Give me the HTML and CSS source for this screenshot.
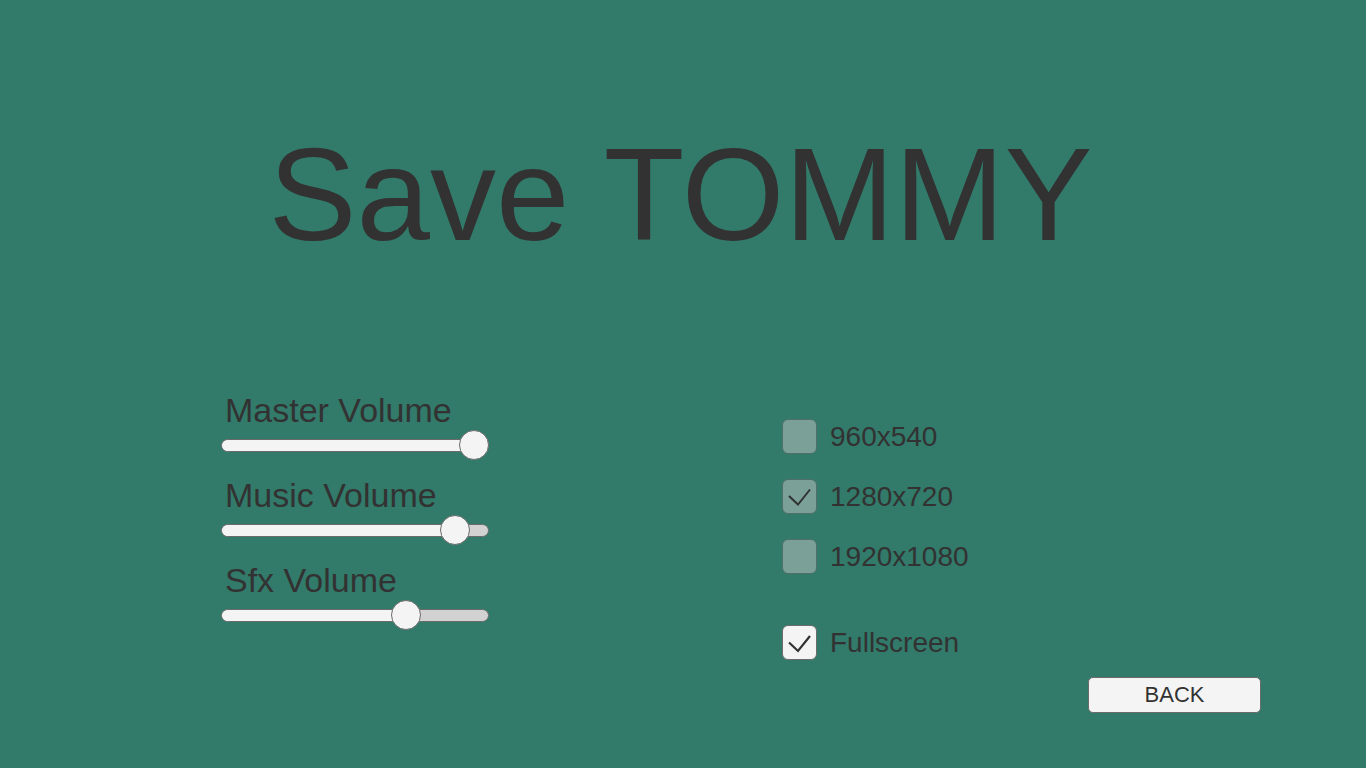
FILE: index.html
```html
<!DOCTYPE html>
<html lang="en">
<head>
<meta charset="utf-8">
<title>Save TOMMY - Options</title>
<link rel="stylesheet" href="styles.css">
</head>
<body>
<main class="screen">
  <h1 class="title">Save TOMMY</h1>
  <section class="settings">
    <div class="volumes">
      <div class="group">
        <div class="label">Master Volume</div>
        <div class="slider"><div class="track"><div class="fill" style="width:100%"></div></div><div class="handle" style="left:238px"></div></div>
      </div>
      <div class="group">
        <div class="label">Music Volume</div>
        <div class="slider"><div class="track"><div class="fill" style="width:234px"></div></div><div class="handle" style="left:219px"></div></div>
      </div>
      <div class="group">
        <div class="label">Sfx Volume</div>
        <div class="slider"><div class="track"><div class="fill" style="width:185px"></div></div><div class="handle" style="left:170px"></div></div>
      </div>
    </div>
    <div class="display">
      <div class="toggle"><span class="box dim"></span><span class="tlabel">960x540</span></div>
      <div class="toggle"><span class="box dim"><svg viewBox="0 0 35 35" width="35" height="35"><path d="M7 17 L16 25.5 L28 10.5" fill="none" stroke="#323232" stroke-width="2"/></svg></span><span class="tlabel">1280x720</span></div>
      <div class="toggle"><span class="box dim"></span><span class="tlabel">1920x1080</span></div>
      <div class="toggle full"><span class="box light"><svg viewBox="0 0 35 35" width="35" height="35"><path d="M7 17.5 L16 26 L28 11" fill="none" stroke="#323232" stroke-width="2.2"/></svg></span><span class="tlabel">Fullscreen</span></div>
      <button class="back">BACK</button>
    </div>
  </section>
</main>
</body>
</html>
```
FILE: styles.css
```css
html, body {
  margin: 0;
  padding: 0;
}
body {
  background: #327a6a;
  font-family: "Liberation Sans", Arial, sans-serif;
  color: #323232;
}
.screen {
  width: 1366px;
  height: 768px;
  overflow: hidden;
  display: flex;
  flex-direction: column;
}
.title {
  margin: 128px 0 0 0;
  font-weight: 400;
  font-size: 132px;
  line-height: 134px;
  text-align: center;
  padding-right: 5px;
}
.settings {
  display: flex;
  margin-top: 128px;
  padding-left: 221px;
  gap: 293px;
}
.volumes {
  width: 268px;
  display: flex;
  flex-direction: column;
  gap: 15px;
}
.label {
  font-size: 34px;
  line-height: 40px;
  padding-left: 4px;
  white-space: nowrap;
}
.slider {
  position: relative;
  height: 30px;
  display: flex;
  align-items: center;
}
.track {
  width: 268px;
  height: 13px;
  box-sizing: border-box;
  border: 1px solid #6b6b6b;
  border-radius: 7px;
  background: #d2d2d2;
  overflow: hidden;
}
.fill {
  height: 100%;
  background: #f4f4f4;
  border-radius: 6px;
}
.handle {
  position: absolute;
  top: 0;
  width: 30px;
  height: 30px;
  box-sizing: border-box;
  border-radius: 50%;
  background: #f4f4f4;
  border: 1px solid #6b6b6b;
}
.display {
  width: 479px;
  display: flex;
  flex-direction: column;
  gap: 25px;
  margin-top: 29px;
}
.toggle {
  display: flex;
  align-items: center;
  gap: 13px;
  height: 35px;
}
.toggle.full {
  margin-top: 26px;
}
.box {
  width: 35px;
  height: 35px;
  box-sizing: border-box;
  border-radius: 6px;
  border: 1px solid #4f6f68;
  display: block;
  flex: none;
}
.box svg {
  display: block;
  margin: -1px;
}
.box.dim {
  background: #7aa098;
}
.box.light {
  background: #f4f4f4;
  border-color: #6b6b6b;
}
.tlabel {
  font-size: 28px;
  line-height: 35px;
}
.back {
  align-self: flex-end;
  margin-top: -8px;
  width: 173px;
  height: 36px;
  box-sizing: border-box;
  background: #f4f4f4;
  border: 1px solid #6b6b6b;
  border-radius: 5px;
  font-family: "Liberation Sans", Arial, sans-serif;
  font-size: 22px;
  color: #323232;
  padding: 0;
  line-height: 34px;
}
```
